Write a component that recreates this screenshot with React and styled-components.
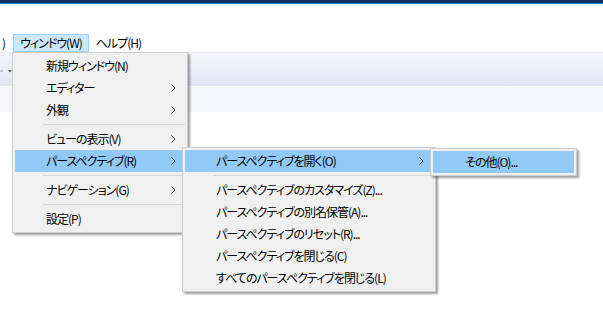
import React from "react";
import styled, { createGlobalStyle } from "styled-components";

const Global = createGlobalStyle`
  html, body { margin: 0; padding: 0; background: #ffffff; }
  body {
    width: 603px; height: 326px; overflow: hidden;
    font-family: "Noto Sans CJK JP", "Noto Sans", sans-serif;
    font-size: 12px; color: #000;
    font-feature-settings: "palt";
    letter-spacing: -1px;
  }
`;

const Page = styled.div`
  position: relative;
  width: 603px;
  height: 326px;
  display: flex;
  flex-direction: column;
  background: #fff;
`;

const TitleStrip = styled.div`
  height: 4px;
  background: linear-gradient(to bottom, #0a2c5c 0, #0c3468 70%, #3476c4 70%, #3476c4 100%);
`;

const TopGap = styled.div`
  height: 30px;
`;

const MenuBar = styled.div`
  height: 18px;
  display: flex;
  align-items: stretch;
`;

const MenuBarItem = styled.div`
  display: flex;
  align-items: center;
  padding: ${(p) => (p.$clipped ? "0 7px 0 1px" : "0 6px 0 6px")};
  border: 1px solid ${(p) => (p.$active ? "#99d1ff" : "transparent")};
  background: ${(p) => (p.$active ? "#cce8ff" : "transparent")};
  white-space: nowrap;
  line-height: 16px;
`;

const Toolbar = styled.div`
  height: 33px;
  border-top: 1px solid #ececec;
  border-bottom: 1px solid #ffffff;
  background: linear-gradient(to bottom, #f5f6fc 0%, #e2e5f4 100%);
  display: flex;
  align-items: center;
`;

const ToolbarStub = styled.div`
  display: flex;
  align-items: center;
  margin-top: 2px;
`;

const SubBar = styled.div`
  height: 25px;
  background: #f4f5fa;
`;

const Menu = styled.div`
  position: absolute;
  left: ${(p) => p.$x}px;
  top: ${(p) => p.$y}px;
  width: ${(p) => p.$w}px;
  box-sizing: border-box;
  background: #f0f0f0;
  border: 1px solid #cccccc;
  padding: 2px;
  display: flex;
  flex-direction: column;
  box-shadow: 2px 2px 2px rgba(0, 0, 0, 0.38);
`;

const Item = styled.div`
  height: 22px;
  display: flex;
  align-items: center;
  justify-content: space-between;
  padding-left: ${(p) => p.$indent || 31}px;
  padding-right: 9px;
  background: ${(p) => (p.$hl ? "#91c9f7" : "transparent")};
  white-space: nowrap;
  line-height: 22px;
`;

const Separator = styled.div`
  height: 7px;
  display: flex;
  align-items: center;
  margin-left: 28px;
  &::after {
    content: "";
    flex: 1;
    height: 1px;
    background: #d7d7d7;
  }
`;

const Chevron = () => (
  <svg width="5" height="8" viewBox="0 0 5 8" style={{ display: "block" }}>
    <path d="M0.5 0.5 L4 4 L0.5 7.5" fill="none" stroke="#333" strokeWidth="1" />
  </svg>
);

const DropTri = () => (
  <svg width="13" height="6" viewBox="0 0 13 6" style={{ display: "block" }}>
    <path d="M0 3 H3" stroke="#9a9a9a" strokeWidth="1" />
    <path d="M8 2 L12 2 L10 4.5 Z" fill="#555" />
  </svg>
);

const MenuItem = ({ label, sub, hl, indent }) => (
  <Item $hl={hl} $indent={indent}>
    <span>{label}</span>
    {sub && <Chevron />}
  </Item>
);

export default function App() {
  return (
    <>
      <Global />
      <Page>
        <TitleStrip />
        <TopGap />
        <MenuBar>
          <MenuBarItem $clipped>)</MenuBarItem>
          <MenuBarItem $active>ウィンドウ(W)</MenuBarItem>
          <MenuBarItem>ヘルプ(H)</MenuBarItem>
        </MenuBar>
        <Toolbar>
          <ToolbarStub>
            <DropTri />
          </ToolbarStub>
        </Toolbar>
        <SubBar />

        <Menu $x={12} $y={52} $w={176}>
          <MenuItem label="新規ウィンドウ(N)" />
          <MenuItem label="エディター" sub />
          <MenuItem label="外観" sub />
          <Separator />
          <MenuItem label="ビューの表示(V)" sub />
          <MenuItem label="パースペクティブ(R)" sub hl />
          <Separator />
          <MenuItem label="ナビゲーション(G)" sub />
          <Separator />
          <MenuItem label="設定(P)" />
        </Menu>

        <Menu $x={182} $y={147} $w={254}>
          <MenuItem label="パースペクティブを開く(O)" sub hl />
          <Separator />
          <MenuItem label="パースペクティブのカスタマイズ(Z)..." />
          <MenuItem label="パースペクティブの別名保管(A)..." />
          <MenuItem label="パースペクティブのリセット(R)..." />
          <MenuItem label="パースペクティブを閉じる(C)" />
          <MenuItem label="すべてのパースペクティブを閉じる(L)" />
        </Menu>

        <Menu $x={430} $y={148} $w={147}>
          <MenuItem label="その他(O)..." hl indent={32} />
        </Menu>
      </Page>
    </>
  );
}
